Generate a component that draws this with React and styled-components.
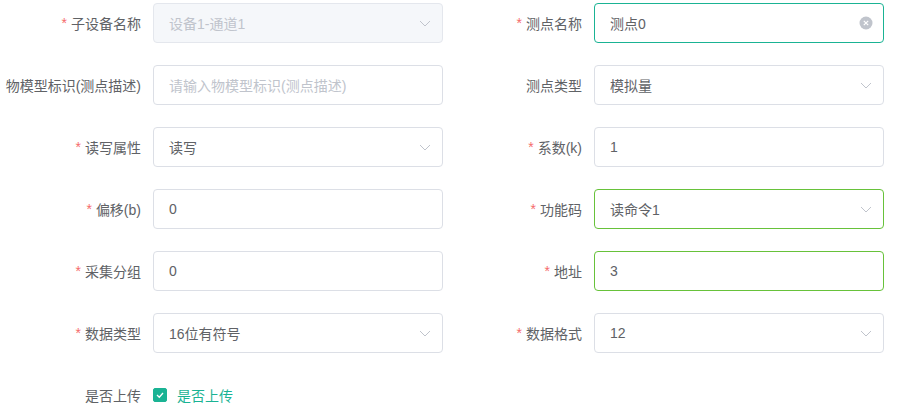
import React from "react";
import styled, { createGlobalStyle } from "styled-components";

const GlobalStyle = createGlobalStyle`
  html, body { margin: 0; padding: 0; background: #ffffff; }
  body {
    font-family: "Liberation Sans", "Noto Sans CJK SC", sans-serif;
    font-size: 14px;
    -webkit-font-smoothing: antialiased;
  }
  * { box-sizing: border-box; }
`;

const TEAL = "#1ab394";
const SUCCESS = "#67c23a";

const Page = styled.div`
  width: 900px;
  height: 409px;
  padding: 3px 0 0 9px;
  overflow: hidden;
`;

const FormGrid = styled.div`
  display: grid;
  grid-template-columns: 441px 450px;
  row-gap: 22px;
`;

const FormItem = styled.div`
  display: flex;
  height: 40px;
  align-items: center;
`;

const Label = styled.label`
  width: 144px;
  flex: none;
  height: 40px;
  display: flex;
  align-items: center;
  justify-content: flex-end;
  padding-right: 12px;
  white-space: nowrap;
  color: #606266;
  font-size: 14px;
`;

const Star = styled.span`
  color: #f56c6c;
  margin-right: 4px;
`;

const Field = styled.div`
  width: 290px;
  height: 40px;
  flex: none;
  display: flex;
  align-items: center;
  padding: 0 15px;
  border: 1px solid ${(p) => p.$border || "#dcdfe6"};
  border-radius: 4px;
  background: ${(p) => (p.$disabled ? "#f5f7fa" : "#ffffff")};
  color: ${(p) => (p.$disabled ? "#c0c4cc" : "#606266")};
  font-size: 14px;
`;

const Value = styled.span`
  flex: 1;
  white-space: nowrap;
  color: ${(p) => (p.$placeholder ? "#c0c4cc" : "inherit")};
`;

const Suffix = styled.span`
  width: 25px;
  margin-right: -10px;
  display: flex;
  align-items: center;
  justify-content: center;
`;

const CheckRow = styled.div`
  display: flex;
  align-items: center;
  gap: 10px;
  color: ${TEAL};
  font-size: 14px;
`;

const CheckBox = styled.span`
  width: 14px;
  height: 14px;
  border-radius: 2px;
  background: ${TEAL};
  border: 1px solid ${TEAL};
  display: flex;
  align-items: center;
  justify-content: center;
  margin-left: 0;
`;

const Chevron = () => (
  <svg width="14" height="14" viewBox="0 0 14 14">
    <polyline points="2,5 7,10 12,5" fill="none" stroke="#c0c4cc" strokeWidth="1" />
  </svg>
);

const ClearIcon = () => (
  <svg width="14" height="14" viewBox="0 0 14 14">
    <circle cx="7" cy="7" r="6.5" fill="#c0c4cc" />
    <path d="M4.8 4.8 L9.2 9.2 M9.2 4.8 L4.8 9.2" stroke="#fff" strokeWidth="1.2" />
  </svg>
);

const Item = ({ label, required, value, placeholder, select, clear, border, disabled }) => (
  <FormItem>
    <Label>
      {required && <Star>*</Star>}
      {label}
    </Label>
    <Field $border={border} $disabled={disabled}>
      <Value $placeholder={!value}>{value || placeholder}</Value>
      {select && (
        <Suffix>
          <Chevron />
        </Suffix>
      )}
      {clear && (
        <Suffix>
          <ClearIcon />
        </Suffix>
      )}
    </Field>
  </FormItem>
);

export default function App() {
  return (
    <>
      <GlobalStyle />
      <Page>
        <FormGrid>
          <Item label="子设备名称" required value="设备1-通道1" select disabled border="#e4e7ed" />
          <Item label="测点名称" required value="测点0" clear border={TEAL} />
          <Item label="物模型标识(测点描述)" placeholder="请输入物模型标识(测点描述)" />
          <Item label="测点类型" value="模拟量" select />
          <Item label="读写属性" required value="读写" select />
          <Item label="系数(k)" required value="1" />
          <Item label="偏移(b)" required value="0" />
          <Item label="功能码" required value="读命令1" select border={SUCCESS} />
          <Item label="采集分组" required value="0" />
          <Item label="地址" required value="3" border={SUCCESS} />
          <Item label="数据类型" required value="16位有符号" select />
          <Item label="数据格式" required value="12" select />
          <FormItem>
            <Label>是否上传</Label>
            <CheckRow>
              <CheckBox>
                <svg width="10" height="10" viewBox="0 0 10 10">
                  <polyline points="2,5 4.3,7.2 8,3" fill="none" stroke="#fff" strokeWidth="1.3" />
                </svg>
              </CheckBox>
              是否上传
            </CheckRow>
          </FormItem>
        </FormGrid>
      </Page>
    </>
  );
}
